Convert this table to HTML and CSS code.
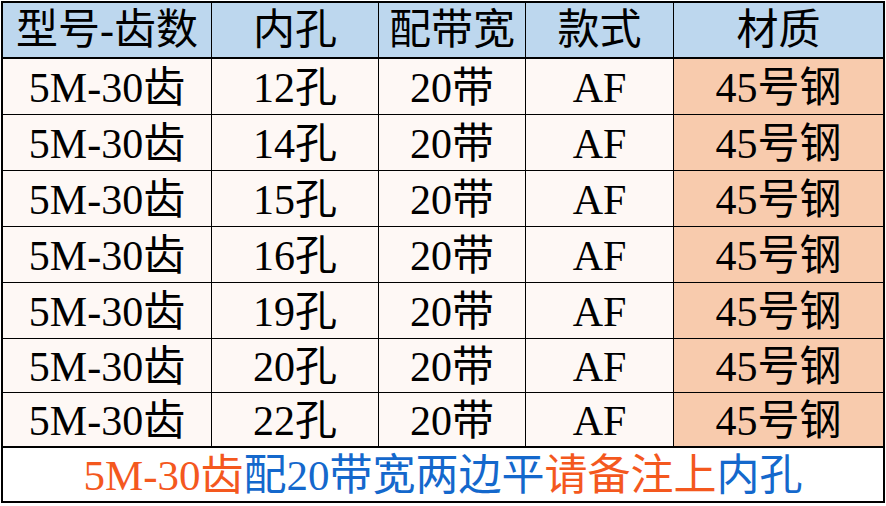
FILE: index.html
```html
<!DOCTYPE html>
<html lang="zh">
<head>
<meta charset="utf-8">
<title>型号表</title>
<link rel="stylesheet" href="styles.css">
</head>
<body>
<div class="sheet">
  <div class="cell head">型号-齿数</div>
  <div class="cell head">内孔</div>
  <div class="cell head">配带宽</div>
  <div class="cell head">款式</div>
  <div class="cell head">材质</div>

  <div class="cell">5M-30齿</div><div class="cell">12孔</div><div class="cell">20带</div><div class="cell">AF</div><div class="cell mat">45号钢</div>
  <div class="cell">5M-30齿</div><div class="cell">14孔</div><div class="cell">20带</div><div class="cell">AF</div><div class="cell mat">45号钢</div>
  <div class="cell">5M-30齿</div><div class="cell">15孔</div><div class="cell">20带</div><div class="cell">AF</div><div class="cell mat">45号钢</div>
  <div class="cell">5M-30齿</div><div class="cell">16孔</div><div class="cell">20带</div><div class="cell">AF</div><div class="cell mat">45号钢</div>
  <div class="cell">5M-30齿</div><div class="cell">19孔</div><div class="cell">20带</div><div class="cell">AF</div><div class="cell mat">45号钢</div>
  <div class="cell">5M-30齿</div><div class="cell">20孔</div><div class="cell">20带</div><div class="cell">AF</div><div class="cell mat">45号钢</div>
  <div class="cell">5M-30齿</div><div class="cell">22孔</div><div class="cell">20带</div><div class="cell">AF</div><div class="cell mat">45号钢</div>

  <div class="cell foot"><span class="orange">5M-30齿</span><span class="blue">配20带宽两边平</span><span class="orange">请备注上</span><span class="blue">内孔</span></div>
</div>
</body>
</html>
```

FILE: styles.css
```css
html, body {
  margin: 0;
  padding: 0;
  background: #ffffff;
}
body {
  padding: 1px 0 0 1px;
}
.sheet {
  width: 884px;
  height: 502px;
  box-sizing: border-box;
  padding: 2px;
  background: #000;
  display: grid;
  grid-template-columns: 208px 166px 146px 147px 209px;
  grid-template-rows: 55px 55px 55px 55px 55px 55px 53px 53px 54px;
  gap: 1px;
  font-family: "Liberation Serif", "Noto Sans CJK SC", serif;
  font-weight: normal;
}
.cell {
  background: #fef8f5;
  color: #000;
  font-size: 42px;
  display: flex;
  align-items: center;
  justify-content: center;
  line-height: 1;
  white-space: nowrap;
  padding-top: 2px;
  box-sizing: border-box;
}
.head {
  background: #bdd7ee;
  border-bottom: 1px solid #000;
  padding-top: 0;
}
.mat {
  background: #f8cbad;
}
.foot {
  grid-column: 1 / -1;
  background: #fff;
  border-top: 1px solid #000;
  font-size: 43px;
  padding-top: 2px;
}
.orange { color: #f4581e; }
.blue { color: #1468cc; }
```
